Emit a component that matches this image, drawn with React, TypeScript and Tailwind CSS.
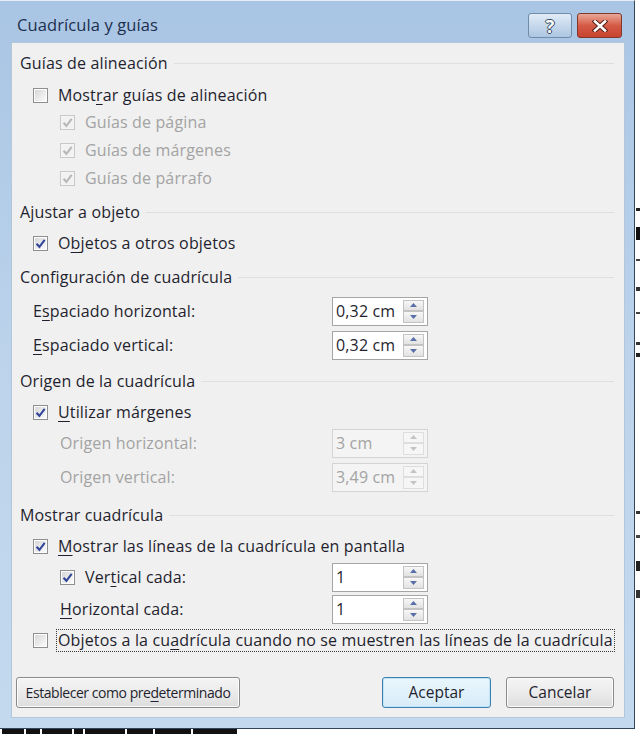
import React from 'react';

const textMain = 'text-[#1f1f2e]';
const textOff = 'text-[#a3a3a3]';
const fs = 'text-[16px] tracking-[0.15px]';

function Check({ checked, disabled }: { checked?: boolean; disabled?: boolean }) {
  return (
    <span
      className={`flex-none w-[15px] h-[15px] border p-[1px] ${
        disabled ? 'border-[#c9c9c9] bg-[#f4f4f4]' : 'border-[#8e8f8f] bg-white'
      }`}
    >
      <span
        className={`flex w-full h-full items-center justify-center ${
          disabled ? 'bg-[#f2f2f2]' : 'bg-gradient-to-br from-[#d8d8d8] to-[#fbfbfb]'
        }`}
      >
        {checked && (
          <svg width="11" height="11" viewBox="0 0 10 10">
            <path
              d="M1.4 5.2 L4 8 L8.8 1.6"
              fill="none"
              stroke={disabled ? '#b8b8b8' : '#34479a'}
              strokeWidth="1.9"
            />
          </svg>
        )}
      </span>
    </span>
  );
}

function Arrow({ up, disabled }: { up?: boolean; disabled?: boolean }) {
  return (
    <span
      className={`flex-1 flex items-center justify-center border ${
        disabled ? 'border-[#dedede] bg-[#f6f6f6]' : 'border-[#c3c3c3] bg-gradient-to-b from-[#f7f7f7] to-[#e2e2e2]'
      }`}
    >
      <svg width="7" height="4" viewBox="0 0 7 4">
        <path d={up ? 'M0 4 L3.5 0 L7 4 Z' : 'M0 0 L3.5 4 L7 0 Z'} fill={disabled ? '#c4c4c4' : '#5a6fa8'} />
      </svg>
    </span>
  );
}

function Spin({ value, disabled }: { value: string; disabled?: boolean }) {
  return (
    <div
      className={`flex w-[96px] h-[29px] border p-[2px] ${
        disabled ? 'border-[#d4d4d4] bg-[#f4f4f4]' : 'border-[#a5a5a5] bg-white'
      }`}
    >
      <span className={`flex-1 flex items-center pl-[1px] ${fs} ${disabled ? textOff : textMain}`}>{value}</span>
      <span className="flex flex-col w-[21px] mr-[1px]">
        <Arrow up disabled={disabled} />
        <Arrow disabled={disabled} />
      </span>
    </div>
  );
}

function Heading({ text, className = '' }: { text: string; className?: string }) {
  return (
    <div className={`flex items-center h-[26px] pl-[8px] pr-[10px] ${className}`}>
      <span className={`${fs} ${textMain}`}>{text}</span>
      <span className="flex-1 h-px bg-[#dfdfdf] ml-[6px]" />
    </div>
  );
}

function CheckRow({
  label,
  checked,
  disabled,
  level = 1,
  className = '',
}: {
  label: React.ReactNode;
  checked?: boolean;
  disabled?: boolean;
  level?: number;
  className?: string;
}) {
  return (
    <div className={`flex items-center h-[26px] gap-[10px] ${level === 1 ? 'pl-[21px]' : 'pl-[48px]'} ${className}`}>
      <Check checked={checked} disabled={disabled} />
      <span className={`${fs} ${disabled ? textOff : textMain}`}>{label}</span>
    </div>
  );
}

const U = ({ children }: { children: React.ReactNode }) => (
  <span className="underline underline-offset-[3px]">{children}</span>
);

function WinButton({
  children,
  className,
  primary,
}: {
  children: React.ReactNode;
  className: string;
  primary?: boolean;
}) {
  return (
    <button
      className={`${className} h-[31px] rounded-[3px] border whitespace-nowrap ${textMain} ${
        primary
          ? 'border-[#3c7fb1] bg-gradient-to-b from-[#eaf6fd] to-[#d7ecf8] shadow-[inset_0_0_0_1px_#bfe3f7]'
          : 'border-[#8a8a8a] bg-gradient-to-b from-[#f4f4f4] via-[#ebebeb] to-[#dddddd] shadow-[inset_0_0_0_1px_#fcfcfc]'
      }`}
    >
      {children}
    </button>
  );
}

export default function App() {
  return (
    <div className="w-[640px] h-[734px] overflow-hidden bg-white flex flex-col font-['Open_Sans',sans-serif]">
      <div className="flex h-[729px]">
        {/* Dialog window */}
        <div className="w-[635px] h-full flex flex-col bg-gradient-to-b from-[#a9c5e4] via-[#bcd3eb] to-[#c3d9ee] border-t border-t-[#e6edf5] border-r border-b border-[#33475c]">
          {/* Title bar */}
          <div className="h-[41px] flex items-start pl-[17px] pr-[12px]">
            <span className="mt-[12px] text-[16.5px] tracking-[0.1px] text-[#1d2f4d]">Cuadrícula y guías</span>
            <div className="ml-auto mt-[12px] flex gap-[5px]">
              <div className="w-[44px] h-[25px] rounded-[3px] border border-[#6f8caa] bg-gradient-to-b from-[#e2ecf7] via-[#c6d8ec] to-[#aec6e2] flex items-center justify-center">
                <span className="text-[18px] font-bold text-white leading-none [text-shadow:1px_0_0_#34465e,-1px_0_0_#34465e,0_1px_0_#34465e,0_-1px_0_#34465e]">?</span>
              </div>
              <div className="w-[45px] h-[25px] rounded-[3px] border border-[#82372c] bg-gradient-to-b from-[#e7a797] via-[#d45a46] to-[#c7432f] flex items-center justify-center">
                <svg width="16" height="12" viewBox="0 0 16 12">
                  <path d="M3 1.5 L13 10.5 M13 1.5 L3 10.5" stroke="#4a1a12" strokeWidth="4.4" strokeLinecap="square" />
                  <path d="M3 1.5 L13 10.5 M13 1.5 L3 10.5" stroke="#ffffff" strokeWidth="2.6" strokeLinecap="square" />
                </svg>
              </div>
            </div>
          </div>

          {/* Client area */}
          <div className="ml-[11px] mr-[9px] mb-[10px] flex-1 flex flex-col bg-[#f0f0f0] border border-[#b3c6da] pt-[7px]">
            <Heading text="Guías de alineación" />
            <CheckRow className="mt-[6px]" label={<>Most<U>r</U>ar guías de alineación</>} />
            <CheckRow className="mt-[1px]" level={2} checked disabled label="Guías de página" />
            <CheckRow className="mt-[2px]" level={2} checked disabled label="Guías de márgenes" />
            <CheckRow className="mt-[2px]" level={2} checked disabled label="Guías de párrafo" />

            <Heading className="mt-[8px]" text="Ajustar a objeto" />
            <CheckRow className="mt-[5px]" checked label={<>O<U>b</U>jetos a otros objetos</>} />

            <Heading className="mt-[8px]" text="Configuración de cuadrícula" />
            <div className="mt-[8px] flex items-center h-[26px]">
              <span className={`w-[320px] pl-[21px] ${fs} ${textMain}`}>
                E<U>s</U>paciado horizontal:
              </span>
              <Spin value="0,32 cm" />
            </div>
            <div className="mt-[8px] flex items-center h-[26px]">
              <span className={`w-[320px] pl-[21px] ${fs} ${textMain}`}>
                <U>E</U>spaciado vertical:
              </span>
              <Spin value="0,32 cm" />
            </div>

            <Heading className="mt-[10px]" text="Origen de la cuadrícula" />
            <CheckRow className="mt-[5px]" checked label={<><U>U</U>tilizar márgenes</>} />
            <div className="mt-[5px] flex items-center h-[26px]">
              <span className={`w-[320px] pl-[48px] ${fs} ${textOff}`}>Origen horizontal:</span>
              <Spin value="3 cm" disabled />
            </div>
            <div className="mt-[8px] flex items-center h-[26px]">
              <span className={`w-[320px] pl-[48px] ${fs} ${textOff}`}>Origen vertical:</span>
              <Spin value="3,49 cm" disabled />
            </div>

            <Heading className="mt-[12px]" text="Mostrar cuadrícula" />
            <CheckRow
              className="mt-[5px]"
              checked
              label={<><U>M</U>ostrar las líneas de la cuadrícula en pantalla</>}
            />
            <div className="mt-[5px] flex items-center h-[26px]">
              <div className="w-[320px] pl-[48px] flex items-center gap-[10px]">
                <Check checked />
                <span className={`${fs} ${textMain}`}>
                  Ver<U>t</U>ical cada:
                </span>
              </div>
              <Spin value="1" />
            </div>
            <div className="mt-[6px] flex items-center h-[26px]">
              <span className={`w-[320px] pl-[48px] ${fs} ${textMain}`}>
                <U>H</U>orizontal cada:
              </span>
              <Spin value="1" />
            </div>
            <div className="mt-[5px] flex items-center h-[26px] pl-[21px] pr-[10px] gap-[8px]">
              <Check />
              <span className={`flex-1 h-[23px] flex items-center px-[1px] border border-dotted border-[#3a3a3a] whitespace-nowrap ${fs} ${textMain}`}>
                Objetos a la cu<U>a</U>drícula cuando no se muestren las líneas de la cuadrícula
              </span>
            </div>

            {/* Buttons */}
            <div className="mt-[24px] flex items-center pl-[4px] pr-[10px]">
              <WinButton className="w-[224px] text-[14px] tracking-[-0.45px]">
                Establecer como pre<U>d</U>eterminado
              </WinButton>
              <div className="ml-auto flex gap-[15px]">
                <WinButton className="w-[109px] text-[15.5px]" primary>
                  Aceptar
                </WinButton>
                <WinButton className="w-[108px] text-[15.5px]">Cancelar</WinButton>
              </div>
            </div>
          </div>
        </div>

        {/* Document behind the dialog, right edge */}
        <div className="relative flex-1">
          <span className="absolute left-[1px] top-[208px] w-[4px] h-[3px] bg-[#222]" />
          <span className="absolute left-[1px] top-[227px] w-[4px] h-[13px] bg-[#111]" />
          <span className="absolute left-[1px] top-[259px] w-[4px] h-[2px] bg-[#444]" />
          <span className="absolute left-[1px] top-[287px] w-[4px] h-[4px] bg-[#333]" />
          <span className="absolute left-[1px] top-[312px] w-[4px] h-[2px] bg-[#444]" />
          <span className="absolute left-[1px] top-[342px] w-[4px] h-[3px] bg-[#333]" />
          <span className="absolute left-[1px] top-[353px] w-[4px] h-[4px] bg-[#222]" />
          <span className="absolute left-[1px] top-[511px] w-[4px] h-[3px] bg-[#333]" />
          <span className="absolute left-[1px] top-[535px] w-[4px] h-[3px] bg-[#444]" />
          <span className="absolute left-[1px] top-[561px] w-[4px] h-[10px] bg-[#222]" />
          <span className="absolute left-[1px] top-[590px] w-[4px] h-[8px] bg-[#333]" />
        </div>
      </div>

      {/* Document behind the dialog, bottom edge */}
      <div className="h-[5px] flex gap-[2px] pl-[2px]">
        <span className="w-[22px] bg-[#111]" />
        <span className="w-[14px] bg-[#111]" />
        <span className="w-[30px] bg-[#111]" />
        <span className="w-[9px] bg-[#111]" />
        <span className="w-[40px] bg-[#111]" />
        <span className="w-[26px] bg-[#111]" />
        <span className="w-[36px] bg-[#111]" />
        <span className="w-[44px] bg-[#111]" />
      </div>
    </div>
  );
}
